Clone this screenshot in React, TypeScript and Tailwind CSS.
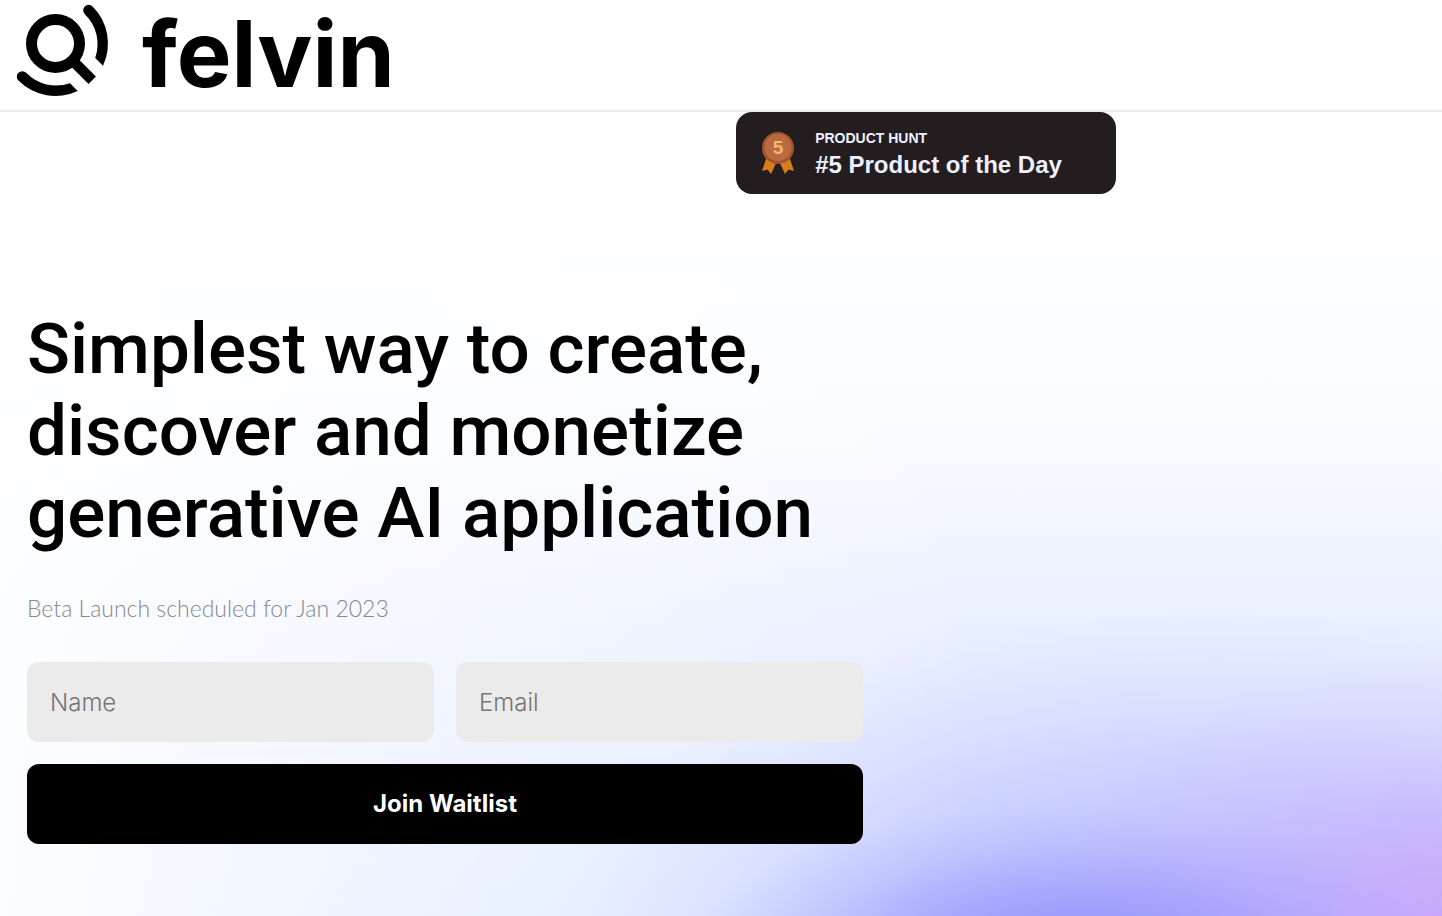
import React from "react";

function Logo() {
  return (
    <a href="/" aria-label="felvin" className="flex h-full items-start">
      <svg viewBox="0 0 128 110" className="h-[110px] w-32 shrink-0" aria-hidden="true">
        <circle cx="55.5" cy="43.5" r="24" fill="none" stroke="#000" strokeWidth="11" />
        <path d="M72 60 92.2 80.2" stroke="#000" strokeWidth="10.5" fill="none" />
        <path d="M92.6 6.4A52.5 52.5 0 0 1 103 65.8L95.2 58A41.5 41.5 0 0 0 84.8 14.2A5.5 5.5 0 0 1 92.6 6.4Z" />
        <path d="M18.4 80.6A52.5 52.5 0 0 0 77.8 91L70 83.2A41.5 41.5 0 0 1 26.2 72.8A5.5 5.5 0 0 0 18.4 80.6Z" />
      </svg>
      <span className="pl-3.5 font-['Inter',sans-serif] text-[92px] leading-[108px] font-bold text-black">
        felvin
      </span>
    </a>
  );
}

function Medal() {
  return (
    <svg viewBox="0 0 34 46" className="h-[46px] w-[34px] shrink-0" aria-hidden="true">
      <path d="M6 26 1 41 6.5 39.5 10 44 16 31Z" fill="#d97d1c" />
      <path d="M28 26 33 41 27.5 39.5 24 44 18 31Z" fill="#d97d1c" />
      <circle cx="17" cy="18" r="16" fill="#a4532f" />
      <circle cx="17" cy="17.5" r="13.5" fill="#b96b3f" />
      <text
        x="17"
        y="24"
        textAnchor="middle"
        fill="#f7b273"
        fontFamily="Liberation Sans, sans-serif"
        fontWeight="700"
        fontSize="19"
      >
        5
      </text>
    </svg>
  );
}

function ProductHuntBadge() {
  return (
    <a
      href="#product-hunt"
      className="ml-[51.05%] flex h-[82px] w-[380px] items-center rounded-2xl bg-[#231d20] pl-[25px] font-['Liberation_Sans',sans-serif] font-bold text-[#eef0ff]"
    >
      <Medal />
      <span className="flex flex-col pt-1 pl-5">
        <span className="text-sm leading-5">PRODUCT HUNT</span>
        <span className="text-2xl leading-[34px]">#5 Product of the Day</span>
      </span>
    </a>
  );
}

const fieldClass =
  "h-20 w-full min-w-0 rounded-xl bg-[#ebebeb] px-[23px] font-['Inter',sans-serif] text-2xl font-light text-black outline-none placeholder:text-[#757575]";

export default function App() {
  return (
    <div className="flex min-h-screen flex-col bg-white">
      <header className="h-28 border-b-2 border-[#ececec]">
        <Logo />
      </header>
      <ProductHuntBadge />
      <main className="flex-1 bg-[radial-gradient(ellipse_26%_20%_at_74%_105%,#918ffa_0%,#918ffa88_40%,#918ffa2b_72%,#918ffa00_100%),radial-gradient(ellipse_32%_42%_at_104%_104%,#c9a2fa_0%,#c9a2fa99_32%,#c9a2fa2b_68%,#c9a2fa00_100%),radial-gradient(ellipse_46%_50%_at_84%_108%,#b3b2ff_0%,#b3b2ffa0_40%,#b3b2ff33_75%,#b3b2ff00_100%),linear-gradient(to_right,#ffffffe6_0%,#ffffff99_22%,#ffffff55_45%,#ffffff00_68%),linear-gradient(to_bottom,#ffffff_0%,#fcfdff_22%,#f7f9ff_38%,#e9f0ff_58%,#e0e9ff_80%,#d9e7ff_100%)] px-[27px] pt-[114px] pb-[72px]">
        <h1 className="font-['Roboto',sans-serif] text-[71px] leading-[82px] font-medium text-black">
          Simplest way to create,
          <br />
          discover and monetize
          <br />
          generative AI application
        </h1>
        <p className="pt-[38px] font-['Lato',sans-serif] text-[23px] leading-8 font-light text-[#85888f]">
          Beta Launch scheduled for Jan 2023
        </p>
        <form
          className="grid max-w-[836px] grid-cols-2 gap-[22px] pt-[38px]"
          onSubmit={(event) => event.preventDefault()}
        >
          <input type="text" name="name" aria-label="Name" placeholder="Name" className={fieldClass} />
          <input type="email" name="email" aria-label="Email" placeholder="Email" className={fieldClass} />
          <button
            type="submit"
            className="col-span-2 h-20 rounded-xl bg-black font-['Inter',sans-serif] text-2xl font-bold text-white"
          >
            Join Waitlist
          </button>
        </form>
      </main>
    </div>
  );
}
